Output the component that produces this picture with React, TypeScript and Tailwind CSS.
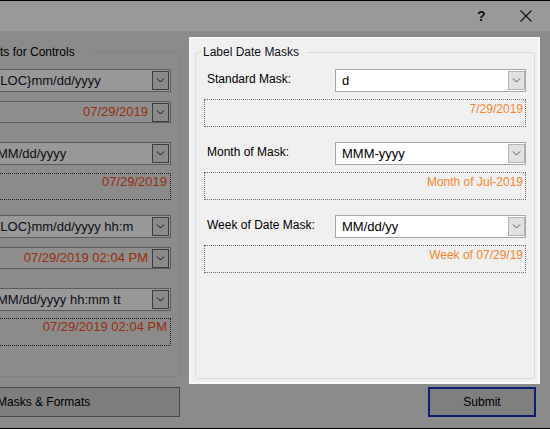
import React from "react";

const Chevron = ({ color }: { color: string }) => (
  <svg width="9" height="5" viewBox="0 0 9 5" fill="none">
    <path d="M1 0.5 L4.5 4 L8 0.5" stroke={color} strokeWidth="1" />
  </svg>
);

// Dimmed dropdown button used by the controls behind the overlay
const DimButton = () => (
  <div className="mr-px flex h-[19px] w-[17px] shrink-0 items-center justify-center border border-[#3c3c3c] bg-[#8a8a8a]">
    <Chevron color="#151515" />
  </div>
);

const DimCombo = ({ text, pad }: { text: string; pad: string }) => (
  <div className="flex h-[23px] items-center border border-[#5c5c5c] bg-[#989898]">
    <span className={`flex-1 overflow-hidden whitespace-nowrap text-[13px] leading-[16px] text-[#0e0e16] ${pad}`}>{text}</span>
    <DimButton />
  </div>
);

const DimDate = ({ text }: { text: string }) => (
  <div className="flex h-[22px] items-center border border-[#5c5c5c] bg-[#8f8f8f]">
    <span className="flex-1 whitespace-nowrap pr-[4px] text-right text-[13px] leading-[16px] text-[#9a2d0b]">{text}</span>
    <DimButton />
  </div>
);

const DimPreview = ({ text, h }: { text: string; h: string }) => (
  <div className={`border border-dotted border-[#1e1e1e] pr-[3px] text-right text-[13px] leading-[16px] text-[#9a2d0b] ${h}`}>
    {text}
  </div>
);

const MaskCombo = ({ text }: { text: string }) => (
  <div className="flex h-[23px] w-[191px] items-center border border-[#a7a7a7] bg-white">
    <span className="flex-1 whitespace-nowrap pl-[6px] text-[13px] leading-[16px] text-black">{text}</span>
    <div className="my-px flex h-[19px] w-[17px] shrink-0 items-center justify-center border border-[#b4b4b4] bg-[#e1e1e1]">
      <Chevron color="#555" />
    </div>
  </div>
);

const MaskRow = ({ label, mask, preview, first }: { label: string; mask: string; preview: string; first?: boolean }) => (
  <div className={first ? "mt-[10px]" : "mt-[15px]"}>
    <div className="flex items-start">
      <span className="ml-[3px] mt-[3px] w-[128px] text-[12px] leading-[14px] text-black">{label}</span>
      <MaskCombo text={mask} />
    </div>
    <div className="mt-[7px] h-[28px] border border-dotted border-[#6b6b6b] pr-[2px] pt-[2px] text-right text-[12px] leading-[14px] text-[#f5862f]">
      {preview}
    </div>
  </div>
);

export default function App() {
  return (
    <div className="flex h-[429px] w-[550px] flex-col overflow-hidden border-y border-black bg-[#8b8b8b] font-['Liberation_Sans',Arial,sans-serif]">
      {/* title bar */}
      <div className="flex h-[30px] shrink-0 items-center bg-[#999999]">
        <span className="ml-[477px] text-[14px] font-bold leading-[16px] text-[#111]">?</span>
        <svg className="ml-[34px]" width="12" height="12" viewBox="0 0 12 12">
          <path d="M0.5 0.5 L11.5 11.5 M11.5 0.5 L0.5 11.5" stroke="#111" strokeWidth="1.1" />
        </svg>
      </div>

      <div className="flex flex-1">
        {/* controls group, partly scrolled out on the left */}
        <div className="w-[180px] shrink-0 overflow-hidden">
          <div className="-ml-[20px] w-[200px] pt-[14px]">
            <fieldset className="h-[332px] rounded-[3px] border border-[#7d868e] pl-[10px] pr-[8px]">
              <legend className="ml-[9px] pr-[16px] text-[12px] leading-[14px] text-black">ts for Controls</legend>
              <div className="mt-[10px]">
                <DimCombo text="{LOC}mm/dd/yyyy" pad="pl-[4px]" />
              </div>
              <div className="mt-[9px]">
                <DimDate text="07/29/2019" />
              </div>
              <div className="mt-[19px]">
                <DimCombo text="MM/dd/yyyy" pad="pl-[5px]" />
              </div>
              <div className="mt-[8px]">
                <DimPreview text="07/29/2019" h="h-[27px]" />
              </div>
              <div className="mt-[15px]">
                <DimCombo text="{LOC}mm/dd/yyyy hh:m" pad="pl-[4px]" />
              </div>
              <div className="mt-[9px]">
                <DimDate text="07/29/2019 02:04 PM" />
              </div>
              <div className="mt-[19px]">
                <DimCombo text="MM/dd/yyyy hh:mm tt" pad="pl-[5px]" />
              </div>
              <div className="mt-[7px]">
                <DimPreview text="07/29/2019 02:04 PM" h="h-[28px]" />
              </div>
            </fieldset>
            <div className="mt-[10px] flex h-[30px] items-center border border-[#484848] bg-[#7e7e7e] pl-[16px] text-[12px] leading-[14px] text-black">
              Masks &amp; Formats
            </div>
          </div>
        </div>

        {/* highlighted label mask panel */}
        <div className="ml-[9px] flex w-[351px] flex-col items-end">
          <div className="mt-[6px] flex h-[347px] w-[351px] flex-col border-2 border-[#f8f8f8] bg-[#f0f0f0] pb-[3px] pl-[4px] pr-[3px] pt-[6px]">
            <fieldset className="flex-1 rounded-[3px] border border-[#d6dee6] px-[8px]">
              <legend className="-ml-[3px] pl-[2px] pr-[8px] text-[12px] leading-[14px] text-[#101020]">Label Date Masks</legend>
              <MaskRow first label="Standard Mask:" mask="d" preview="7/29/2019" />
              <MaskRow label="Month of Mask:" mask="MMM-yyyy" preview="Month of Jul-2019" />
              <MaskRow label="Week of Date Mask:" mask="MM/dd/yy" preview="Week of 07/29/19" />
            </fieldset>
          </div>
          <div className="mr-[4px] mt-[3px] flex h-[30px] w-[108px] items-center justify-center border-2 border-[#0c1d78] bg-[#7f7f7f] text-[12px] leading-[14px] text-black">
            Submit
          </div>
        </div>
      </div>
    </div>
  );
}
